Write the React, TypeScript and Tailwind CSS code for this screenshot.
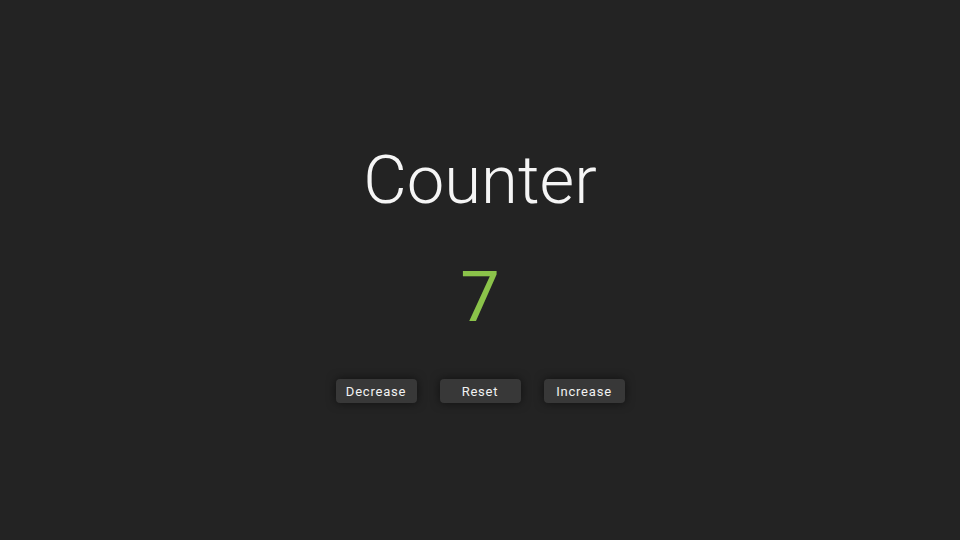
import { useState } from 'react'

export default function App() {
  const [count, setCount] = useState(7)

  const btn =
    'h-6 w-[81px] rounded bg-[#383838] pt-px text-[13px] font-normal tracking-[0.06em] text-[#f2f2f2] shadow-[0_0_10px_rgba(0,0,0,0.55)] hover:bg-[#444]'

  return (
    <div className="flex h-[540px] w-[960px] flex-col items-center bg-[#232323] pt-[136px] font-['Roboto',sans-serif]">
      <h1 className="text-[67px] font-light leading-[88px] text-[#f5f5f5]">Counter</h1>
      <div className="mt-[33px] text-[70px] font-normal leading-[80px] text-[#8bc34a]">{count}</div>
      <div className="mt-[42px] flex gap-[23px]">
        <button className={btn} onClick={() => setCount(count - 1)}>
          Decrease
        </button>
        <button className={btn} onClick={() => setCount(0)}>
          Reset
        </button>
        <button className={btn} onClick={() => setCount(count + 1)}>
          Increase
        </button>
      </div>
    </div>
  )
}
